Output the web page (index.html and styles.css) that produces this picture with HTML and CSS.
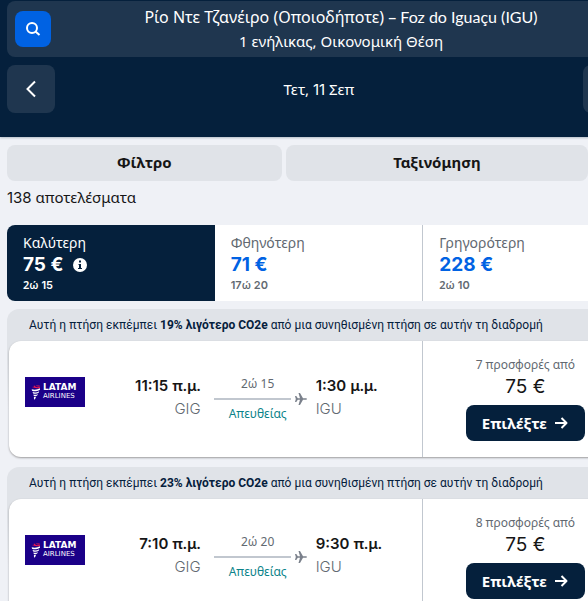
FILE: index.html
```html
<!DOCTYPE html>
<html lang="el">
<head>
<meta charset="utf-8">
<meta name="viewport" content="width=device-width, initial-scale=1">
<title>Πτήσεις</title>
<link rel="stylesheet" href="styles.css">
</head>
<body>
<svg class="defs" aria-hidden="true">
  <symbol id="arrow" viewBox="0 0 16 16"><path d="M2 8h11M8.500 3l5 5-5 5" fill="none" stroke="currentColor" stroke-width="2" stroke-linejoin="round"/></symbol>
  <symbol id="plane" viewBox="0 0 12 12"><path d="M0 3h1.300L2.800 5.200H5L3.500 0H5l3 5.200h2.800c1.500 0 1.500 1.600 0 1.600H8L5 12H3.500L5 6.800H2.800L1.300 9H0l.8-3z" fill="currentColor"/></symbol>
  <symbol id="latam" viewBox="0 0 10 15"><path d="M.8 1.800C3 3.300 6 3.500 8.800 3L9 1.800C6 2.500 4.500 2.300 3.500.6L2.500.9l.6 1.300z" fill="#ed1650"/><path d="M4.500.5C6 1.500 7.500 1.600 9 1.200L8.500.6z" fill="#ed1650"/><path d="M.7 4.300c3 .9 6 .3 8.300-1v1.500C6 6.500 3 6.700 1 5.800zM1.600 7c2.400.8 4.600.4 6.600-.8l-.5 1.600C6 8.900 4 9.100 2.100 8.400zM2.400 9.500c1.500.5 3 .3 4.500-.6l-.7 1.600c-1 .7-2.200.8-3.400.4zM2.900 12c.8.200 1.500.1 2.300-.4L4 14.300l-1 .2z" fill="#fff"/></symbol>
</svg>
<div class="page">
  <header class="top">
    <div class="search">
      <button class="search-button" aria-label="Αναζήτηση">
        <svg width="16" height="16" viewBox="0 0 16 16" fill="none" stroke="currentColor" stroke-width="2"><circle cx="7" cy="7" r="5"/><path d="M10.500 10.500 14.500 14"/></svg>
      </button>
      <div class="search-text">
        <div>Ρίο Ντε Τζανέιρο (Οποιοδήποτε) – <span class="place">Foz do Iguaçu (IGU)</span></div>
        <div class="cabin">1 ενήλικας, Οικονομική Θέση</div>
      </div>
    </div>
    <div class="dates">
      <button class="day" aria-label="Προηγούμενη ημέρα"><svg width="24" height="24" viewBox="0 0 24 24"><path d="M16 4.500 8.500 12l7.500 7.500" fill="none" stroke="currentColor" stroke-width="2"/></svg></button>
      <div class="date">Τετ, <span class="latin">11</span> Σεπ</div>
      <button class="day" aria-label="Επόμενη ημέρα"><svg width="24" height="24" viewBox="0 0 24 24"><path d="m8 4.500 7.500 7.500L8 19.500" fill="none" stroke="currentColor" stroke-width="2"/></svg></button>
    </div>
  </header>
  <main class="results">
    <div class="filters">
      <button class="filter">Φίλτρο</button>
      <button class="filter filter-wide">Ταξινόμηση</button>
    </div>
    <p class="count"><span class="latin">138</span> αποτελέσματα</p>
    <div class="tabs">
      <button class="tab tab-active">
        <span class="tab-name">Καλύτερη</span>
        <span class="tab-price">75 € <svg width="14" height="14" viewBox="0 0 14 14"><circle cx="7" cy="7" r="7" fill="#fff"/><path d="M6 2.500h2v2H6zM5.500 6H8v4h1v1H5v-1h1V7h-.5z" fill="#05203c"/></svg></span>
        <span class="tab-time">2ώ <span class="latin">15</span></span>
      </button>
      <button class="tab">
        <span class="tab-name">Φθηνότερη</span>
        <span class="tab-price">71 €</span>
        <span class="tab-time"><span class="latin">17</span>ώ <span class="latin">20</span></span>
      </button>
      <button class="tab">
        <span class="tab-name">Γρηγορότερη</span>
        <span class="tab-price">228 €</span>
        <span class="tab-time">2ώ <span class="latin">10</span></span>
      </button>
    </div>
    <article class="ticket">
      <p class="eco">Αυτή η πτήση εκπέμπει <b>19% λιγότερο CO2e</b> από μια συνηθισμένη πτήση σε αυτήν τη διαδρομή</p>
      <div class="card">
        <div class="leg">
          <div class="logo"><svg width="10" height="15"><use href="#latam"/></svg><div><div class="logo-name">LATAM</div><div class="logo-sub">AIRLINES</div></div></div>
          <div class="stop depart"><b><span class="latin">11:15</span> π.μ.</b><span class="airport">GIG</span></div>
          <div class="path"><span>2ώ 15</span><div class="line"><svg width="12" height="12"><use href="#plane"/></svg></div><span class="direct">Απευθείας</span></div>
          <div class="stop"><b><span class="latin">1:30</span> μ.μ.</b><span class="airport">IGU</span></div>
        </div>
        <div class="offer">
          <span class="deals">7 προσφορές από</span>
          <span class="price">75 €</span>
          <button class="select">Επιλέξτε <svg width="16" height="16"><use href="#arrow"/></svg></button>
        </div>
      </div>
    </article>
    <article class="ticket">
      <p class="eco">Αυτή η πτήση εκπέμπει <b>23% λιγότερο CO2e</b> από μια συνηθισμένη πτήση σε αυτήν τη διαδρομή</p>
      <div class="card">
        <div class="leg">
          <div class="logo"><svg width="10" height="15"><use href="#latam"/></svg><div><div class="logo-name">LATAM</div><div class="logo-sub">AIRLINES</div></div></div>
          <div class="stop depart"><b><span class="latin">7:10</span> π.μ.</b><span class="airport">GIG</span></div>
          <div class="path"><span>2ώ 20</span><div class="line"><svg width="12" height="12"><use href="#plane"/></svg></div><span class="direct">Απευθείας</span></div>
          <div class="stop"><b><span class="latin">9:30</span> π.μ.</b><span class="airport">IGU</span></div>
        </div>
        <div class="offer">
          <span class="deals">8 προσφορές από</span>
          <span class="price">75 €</span>
          <button class="select">Επιλέξτε <svg width="16" height="16"><use href="#arrow"/></svg></button>
        </div>
      </div>
    </article>
  </main>
</div>
</body>
</html>
```
FILE: styles.css
```css
* { box-sizing: border-box; }
html { scrollbar-width: none; }
body {
  margin: 0;
  overflow-x: hidden;
  background: #eff1f6;
  color: #161616;
  font: 15px/24px "Noto Sans", sans-serif;
}
button { border: 0; padding: 0; font: inherit; color: inherit; cursor: pointer; }
p { margin: 0; }
svg { display: block; flex: none; }
.defs { display: none; }
.latin { font-family: Inter, sans-serif; line-height: 1; }
.page { min-width: 638px; }

.top {
  display: flex;
  flex-direction: column;
  gap: 8px;
  padding: 1px 7px 24px;
  background: #05203c;
  color: #fff;
  box-shadow: 0 1px 2px #05203c40;
}
.search {
  display: flex;
  align-items: center;
  padding: 4px 0 4px 8px;
  border-radius: 8px;
  background: #1f364f;
}
.search-button {
  display: grid;
  place-items: center;
  width: 36px;
  height: 36px;
  border-radius: 8px;
  background: #0062e3;
}
.search-text { flex: 1; text-align: center; font-size: 16px; }
.place { font-family: Lato, sans-serif; line-height: 1; }
.cabin { font-size: 15px; }
.dates { display: flex; align-items: center; justify-content: space-between; }
.day {
  display: grid;
  place-items: center;
  width: 48px;
  height: 48px;
  border-radius: 8px;
  background: #1f364f;
}

.results { padding: 8px 8px 8px 7px; }
.filters { display: flex; gap: 4px; padding-right: 42px; }
.filter {
  flex: 10;
  height: 36px;
  padding-bottom: 2px;
  border-radius: 8px;
  background: #e0e3e8;
  font-weight: 700;
}
.filter-wide { flex-grow: 11; }
.count { padding: 4px 0 16px; }
.tabs {
  display: grid;
  grid-template-columns: repeat(3, 1fr);
  overflow: hidden;
  border-radius: 8px;
  background: #fff;
}
.tab {
  display: flex;
  flex-direction: column;
  align-items: flex-start;
  padding: 8px 16px;
  background: #fff;
  color: #626971;
}
.tab + .tab + .tab { border-left: 1px solid #c1c7cf; }
.tab-name { font-size: 14px; line-height: 20px; }
.tab-price {
  display: flex;
  align-items: center;
  gap: 9px;
  color: #0062e3;
  font: 700 19px/24px Inter, sans-serif;
}
.tab-time { font-size: 11px; line-height: 16px; font-weight: 600; }
.tab-active, .tab-active .tab-price { color: #fff; }
.tab-active { background: #05203c; }

.ticket {
  margin-top: 8px;
  padding: 0 2px 2px;
  border-radius: 12px;
  background: linear-gradient(#e0e3e8 50px, transparent 100px);
}
.eco {
  padding: 6px 20px;
  color: #05203c;
  font: 12px/20px Roboto, sans-serif;
  white-space: nowrap;
}
.card {
  display: grid;
  grid-template-columns: 2fr 1fr;
  min-height: 116px;
  border-radius: 12px;
  background: #fff;
  box-shadow: 0 1px 2px #25201f66;
}
.leg { display: flex; align-items: center; padding: 0 15px 0 16px; }
.logo {
  display: flex;
  align-items: center;
  gap: 2px;
  width: 60px;
  height: 30px;
  margin: 0 auto 14px 0;
  padding-left: 6px;
  background: #1b0088;
  color: #fff;
  font: 700 9px/9px "DejaVu Sans", sans-serif;
}
.logo-sub { font-size: 7px; font-weight: 400; }
.stop { display: flex; flex-direction: column; width: 91px; padding-bottom: 5px; }
.stop b { font-weight: 600; }
.depart { align-items: flex-end; }
.airport { color: #626971; font-family: Inter, sans-serif; font-weight: 300; }
.path {
  display: flex;
  flex-direction: column;
  align-items: center;
  width: 93px;
  margin: 0 9px 0 13px;
  padding: 0 5px 0 0;
  color: #626971;
  font-size: 12px;
  line-height: 16px;
}
.line { display: flex; align-items: center; align-self: stretch; gap: 4px; margin-right: -5px; height: 14px; color: #7a808b; }
.line::before { content: ""; flex: 1; height: 2px; background: #c1c7cf; }
.direct { color: #0c838a; }
.offer {
  display: flex;
  flex-direction: column;
  align-items: center;
  padding: 16px 0;
  border-left: 1px solid #c1c7cf;
}
.deals { color: #626971; font-size: 12px; line-height: 16px; }
.price { margin-bottom: 4px; font: 19px/28px Inter, sans-serif; }
.select {
  display: flex;
  align-items: center;
  gap: 6px;
  height: 36px;
  padding: 0 16px;
  border-radius: 8px;
  background: #05203c;
  color: #fff;
  font-weight: 700;
}
```
